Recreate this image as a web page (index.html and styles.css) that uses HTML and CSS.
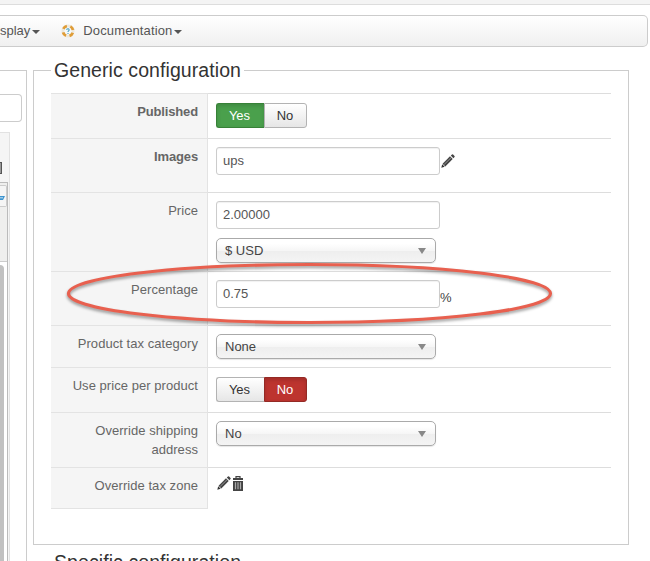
FILE: index.html
```html
<!DOCTYPE html>
<html lang="en">
<head>
<meta charset="utf-8">
<title>Configuration</title>
<link rel="stylesheet" href="styles.css">
</head>
<body>
<svg class="defs" width="0" height="0">
  <symbol id="pencil" viewBox="0 0 14 14">
    <path d="M0.3 13.8 1.2 10.3 3.7 12.8Z" fill="#333"/>
    <path d="M1.6 9.7 9 2.3 11.7 5 4.3 12.4Z" fill="#444"/>
    <path d="M3.2 10.4 10 3.8" stroke="#999" stroke-width="0.9"/>
    <path d="M9.8 1.6 11 0.5Q11.5 0 12.1 0.5L13.5 1.9Q14 2.5 13.5 3L12.4 4.2Z" fill="#444"/>
  </symbol>
</svg>
<div class="strip"></div>
<nav class="navbar">
  <a class="item">splay<i class="caret"></i></a>
  <a class="item docs">
    <svg width="14" height="14" viewBox="0 0 14 14">
      <circle cx="7" cy="7" r="5" fill="none" stroke="#eee8dc" stroke-width="3"/>
      <circle cx="7" cy="7" r="5" fill="none" stroke="#df9d38" stroke-width="3" stroke-dasharray="4.3 3.554" stroke-dashoffset="-1.8"/>
      <circle cx="7" cy="7" r="3.4" fill="#f4f9fb"/>
      <path d="M5.6 5.8Q6 4.6 7.2 4.8 8.5 5.2 8 6.4L7.1 7.5V8M7 9V10" fill="none" stroke="#4ba3c7" stroke-width="1.1"/>
    </svg>
    <span>Documentation</span><i class="caret"></i>
  </a>
</nav>
<main class="columns">
  <aside class="side">
    <div class="side-input"></div>
    <div class="side-panel">
      <div class="side-icon"></div>
      <div class="editor">
        <div class="editor-tools"><div class="tool"><svg width="5" height="6" viewBox="0 0 5 6"><path d="M0 1H5L3 5H0Z" fill="#3d94cf"/><path d="M0 2.8H3" stroke="#c5e2f5"/></svg></div></div>
        <div class="thumb"></div>
      </div>
    </div>
  </aside>
  <div class="content">
    <fieldset class="box">
      <legend><span>Generic configuration</span></legend>
      <div class="rows">
        <div class="row r1"><div class="label strong">Published</div><div class="value"><div class="toggle"><span class="btn yes on-green">Yes</span><span class="btn no">No</span></div></div></div>
        <div class="row r2"><div class="label strong">Images</div><div class="value"><div class="line"><div class="input">ups</div><svg class="edit" width="14" height="14"><use href="#pencil"/></svg></div></div></div>
        <div class="row r3"><div class="label">Price</div><div class="value"><div class="input">2.00000</div><div class="select second">$ USD<i class="arrow"></i></div></div></div>
        <div class="row r4"><div class="label">Percentage</div><div class="value"><div class="line"><div class="input">0.75</div><span class="unit">%</span></div></div></div>
        <div class="row r5"><div class="label">Product tax category</div><div class="value"><div class="select">None<i class="arrow"></i></div></div></div>
        <div class="row r6"><div class="label">Use price per product</div><div class="value"><div class="toggle"><span class="btn yes">Yes</span><span class="btn no on-red">No</span></div></div></div>
        <div class="row r7"><div class="label">Override shipping address</div><div class="value"><div class="select">No<i class="arrow"></i></div></div></div>
        <div class="row r8"><div class="label">Override tax zone</div><div class="value"><div class="icons">
          <svg width="14" height="14"><use href="#pencil"/></svg>
          <svg width="10" height="15" viewBox="0 0 10 15"><path d="M3 2V0.7H7V2" fill="none" stroke="#444" stroke-width="1.2"/><rect y="2" width="10" height="2" fill="#444"/><rect y="5" width="10" height="10" fill="#444"/><path d="M2.5 6.3V13.2M5 6.3V13.2M7.5 6.3V13.2" stroke="#aaa" stroke-width="1.2"/></svg>
        </div></div></div>
      </div>
    </fieldset>
    <h2 class="next-title">Specific configuration</h2>
  </div>
</main>
<svg class="highlight" width="500" height="76" viewBox="0 0 500 76">
  <ellipse cx="249.5" cy="35.5" rx="241" ry="29" fill="none" stroke="#e8604f" stroke-width="3.2"/>
</svg>
</body>
</html>
```
FILE: styles.css
```css
* { box-sizing: border-box; }
html { overflow: hidden; }
body {
  margin: 0;
  height: 561px;
  overflow: hidden;
  position: relative;
  background: #fff;
  color: #444;
  font: 13px/19px "Liberation Sans", Arial, sans-serif;
}
svg { display: block; flex: none; }
.defs { position: absolute; }
.strip { height: 5px; background: #f4f4f4; border-bottom: 1px solid #ddd; }
.navbar {
  display: flex;
  height: 32px;
  margin: 10px 2px 0 0;
  padding-bottom: 1px;
  border: 1px solid #ccc;
  border-left: 0;
  border-radius: 0 5px 5px 0;
  background: linear-gradient(#fff, #f0f0f0);
  color: #555;
}
.item { display: flex; align-items: center; }
.item span { letter-spacing: .12px; }
.docs { margin-left: 21px; }
.docs span { margin-left: 8px; }
.caret {
  margin: 3px 0 0 2px;
  border: 4px solid transparent;
  border-top-color: #555;
  border-bottom: 0;
}
.columns { display: flex; height: 500px; margin-top: 14px; gap: 6px; }
.side {
  width: 27px;
  height: 491px;
  margin-top: 9px;
  padding-top: 23px;
  border: solid #ccc;
  border-width: 1px 1px 0 0;
  flex: none;
}
.side-input {
  width: 22px;
  height: 28px;
  border: 1px solid #ccc;
  border-left: 0;
  border-radius: 0 4px 4px 0;
}
.side-panel {
  width: 10px;
  height: 429px;
  margin-top: 10px;
  padding-top: 29px;
  background: #f5f5f5;
  border: solid #e2e2e2;
  border-width: 1px 1px 0 0;
}
.side-icon { width: 2px; height: 12px; background: #999; border: solid #555; border-width: 1px 1px 1px 0; }
.editor { width: 8px; height: 379px; margin-top: 8px; border: solid #bbb; border-width: 1px 1px 0 0; background: #fff; }
.editor-tools { height: 79px; padding-top: 2px; background: #efefee; border-bottom: 1px solid #ccc; }
.tool { width: 7px; height: 22px; padding-top: 9px; border: 1px solid #ccc; border-left: 0; border-radius: 0 2px 2px 0; background: #f5f5f5; }
.thumb { width: 4px; height: 296px; margin-top: 3px; background: #c1c1c1; border-radius: 0 4px 0 0; }
.content { width: 596px; }
.box { height: 484px; margin: 0; padding: 0 17px; border: 1px solid #ccc; }
legend, .next-title {
  height: 19px;
  padding: 0 3px;
  color: #333;
  font-size: 19.5px;
  font-weight: normal;
  letter-spacing: .08px;
  line-height: 19px;
}
.next-title { height: 8px; margin: 8px 0 0 18px; }
.rows { padding-top: 13px; }
.row { display: flex; }
.label {
  width: 157px;
  padding: 8px 9px 0 8px;
  border: solid #e3e3e3;
  border-width: 1px 1px 0 0;
  background: #f5f5f5;
  color: #666;
  text-align: right;
  letter-spacing: .05px;
  flex: none;
}
.strong { font-weight: bold; letter-spacing: -.15px; }
.value { width: 403px; padding: 8px 8px 0; border-top: 1px solid #ddd; }
.r1, .r6 { height: 45px; }
.r2, .r4 { height: 54px; }
.r3 { height: 79px; }
.r5 { height: 42px; }
.r7 { height: 55px; }
.r8 { height: 42px; }
.r8 .label { border-bottom-width: 1px; }
.line { display: flex; }
.input {
  width: 224px;
  height: 28px;
  padding: 4px 6px;
  border: 1px solid #ccc;
  border-radius: 3px;
  line-height: 18px;
  color: #555;
  box-shadow: inset 0 1px 1px rgba(0,0,0,.06);
}
.edit { margin: 7px 0 0 1px; }
.unit { margin-top: 8px; }
.select {
  display: flex;
  align-items: center;
  justify-content: space-between;
  width: 220px;
  height: 25px;
  padding: 0 9px 0 8px;
  border: 1px solid #aaa;
  border-radius: 5px;
  background: linear-gradient(#fff 20%, #f6f6f6 50%, #eee 52%, #f4f4f4);
  box-shadow: 0 1px 1px rgba(0,0,0,.1);
}
.second { margin-top: 9px; }
.arrow { border: solid transparent; border-width: 6px 4px 0; border-top-color: #888; }
.toggle { display: flex; padding-top: 1px; }
.btn {
  height: 25px;
  border: 1px solid #b3b3b3;
  background: linear-gradient(#fff, #e6e6e6);
  color: #333;
  text-align: center;
  line-height: 24px;
}
.yes { width: 48px; padding-right: 2px; border-radius: 3px 0 0 3px; border-right: 0; }
.no { width: 43px; padding-right: 1px; border-radius: 0 3px 3px 0; }
.on-green { background: #4aa04c; border-color: #378137; color: #fff; box-shadow: inset 0 2px 4px rgba(0,0,0,.15); }
.on-red { background: #bd342f; border-color: #942a25; color: #fff; box-shadow: inset 0 2px 4px rgba(0,0,0,.15); }
.icons { display: flex; gap: 2px; padding-left: 1px; }
.highlight { position: absolute; left: 60px; top: 258px; filter: drop-shadow(0 2px 1.5px rgba(0,0,0,.4)); }
```
